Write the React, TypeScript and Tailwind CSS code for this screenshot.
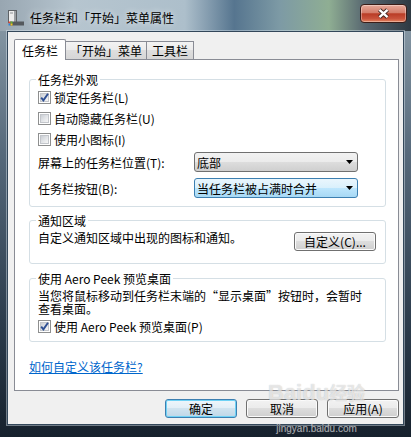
import React from "react";

const font = "font-['Noto_Sans_CJK_SC','Noto_Sans',sans-serif]";

const grayBtn =
  "flex h-[19px] items-center justify-center rounded-[3px] border border-[#707070] bg-[linear-gradient(180deg,#f2f2f2_0%,#ebebeb_50%,#dddddd_50%,#cfcfcf_100%)] shadow-[inset_0_0_0_1px_#fbfbfb]";

function TaskbarIcon() {
  return (
    <svg className="ml-[8px] mt-[10px] shrink-0" width="16" height="16" viewBox="0 0 16 16">
      <rect x="0.5" y="0.5" width="8" height="12" fill="#ececec" stroke="#5e6266" />
      <rect x="6" y="1" width="2" height="11" fill="#9a9ea2" />
      <rect x="2" y="2.5" width="3" height="1" fill="#8b8f93" />
      <rect x="2" y="11.5" width="14" height="4" fill="#55595d" />
      <rect x="0.5" y="11.5" width="2" height="2" fill="#e8412c" />
      <rect x="2.5" y="11.5" width="2" height="2" fill="#5fb336" />
      <rect x="0.5" y="13.5" width="2" height="2" fill="#2a86d8" />
      <rect x="2.5" y="13.5" width="2" height="2" fill="#f7c21b" />
    </svg>
  );
}

function CheckBox({ checked }: { checked?: boolean }) {
  return (
    <span className="relative flex h-[13px] w-[13px] shrink-0 items-center justify-center border border-[#8e8f8f] bg-white">
      <span className="h-[9px] w-[9px] border border-[#c3c6cb] bg-[linear-gradient(135deg,#cbcfd5_0%,#e4e6e9_55%,#f6f6f6_100%)]" />
      {checked && (
        <svg className="absolute left-[0px] top-[0px]" width="11" height="11" viewBox="0 0 11 11">
          <path d="M2.2 5.6 L4.4 8.4 L9 1.8" fill="none" stroke="#2e4f93" strokeWidth="1.9" />
        </svg>
      )}
    </span>
  );
}

function CheckRow({ checked, label, className = "" }: { checked?: boolean; label: string; className?: string }) {
  return (
    <div className={`flex h-[13px] items-center gap-[3px] ${className}`}>
      <CheckBox checked={checked} />
      <span className="whitespace-nowrap">{label}</span>
    </div>
  );
}

function Combo({ text, hot }: { text: string; hot?: boolean }) {
  return (
    <div
      className={
        hot
          ? "flex h-[20px] w-[164px] items-center justify-between rounded-[3px] border border-[#3c7fb1] bg-[linear-gradient(180deg,#eaf6fd_0%,#d9f0fc_50%,#bee6fd_50%,#a7d9f5_100%)] pl-[2px] pr-[4px]"
          : "flex h-[20px] w-[164px] items-center justify-between rounded-[3px] border border-[#707070] bg-[linear-gradient(180deg,#f2f2f2_0%,#ebebeb_50%,#dddddd_50%,#cfcfcf_100%)] pl-[2px] pr-[4px]"
      }
    >
      <span className="whitespace-nowrap">{text}</span>
      <svg width="7" height="4" viewBox="0 0 7 4">
        <path d="M0 0H7L3.5 4Z" fill="#000" />
      </svg>
    </div>
  );
}

export default function App() {
  return (
    <div
      className={`relative flex h-[437px] w-[411px] flex-col overflow-hidden bg-[linear-gradient(180deg,#8e9fab_0%,#56697b_35%,#2b3b4b_75%,#16212d_100%)] text-[12px] leading-[13px] text-black ${font}`}
    >
      {/* title bar */}
      <div className="flex h-[31px] shrink-0 items-start bg-[linear-gradient(90deg,#98a6b1_0%,#b6c5cf_18%,#adbfcb_45%,#56758f_57%,#7d9aa5_68%,#8fae93_80%,#56656f_89%,#2e3942_100%)]">
        <TaskbarIcon />
        <span className="ml-[6px] mt-[11px] whitespace-nowrap [text-shadow:0_0_6px_rgba(255,255,255,0.8)]">
          任务栏和「开始」菜单属性
        </span>
        <div className="ml-auto mr-[4px] mt-[4px] flex h-[19px] w-[47px] items-center justify-center rounded-[4px] border border-[#3b1d18] bg-[linear-gradient(180deg,#e6a899_0%,#d47e6b_45%,#b93c26_52%,#c9533c_80%,#e3845f_100%)] shadow-[inset_0_0_0_1px_rgba(255,255,255,0.35)]">
          <svg width="13" height="11" viewBox="0 0 13 11">
            <path d="M2.5 1.8 L10.5 9.2 M10.5 1.8 L2.5 9.2" stroke="#3a2420" strokeWidth="4.2" />
            <path d="M2.5 1.8 L10.5 9.2 M10.5 1.8 L2.5 9.2" stroke="#fff" strokeWidth="2.4" />
          </svg>
        </div>
      </div>

      {/* client area */}
      <div className="mx-[7px] flex h-[394px] shrink-0 flex-col border border-[#33475a] bg-[#f0f0f0] shadow-[0_0_0_1px_rgba(220,230,240,0.45)]">
        {/* tabs */}
        <div className="ml-[6px] mt-[7px] flex h-[20px] items-end">
          <div className="relative z-10 -mb-[1px] flex h-[21px] w-[52px] items-center justify-center rounded-t-[2px] border border-b-0 border-[#898c95] bg-white">
            任务栏
          </div>
          <div className="flex h-[18px] w-[81px] items-center justify-center border-r border-t border-[#898c95] bg-[linear-gradient(180deg,#f3f3f3_0%,#ebebeb_50%,#dedede_50%,#d6d6d6_100%)]">
            「开始」菜单
          </div>
          <div className="flex h-[18px] w-[47px] items-center justify-center border-r border-t border-[#898c95] bg-[linear-gradient(180deg,#f3f3f3_0%,#ebebeb_50%,#dedede_50%,#d6d6d6_100%)]">
            工具栏
          </div>
        </div>

        {/* tab page */}
        <div className="ml-[6px] h-[332px] w-[385px] border border-[#898c95] bg-white pl-[14px] pr-[12px] pt-[13px]">
          <fieldset className="rounded-[3px] border border-[#d5dfe5] pb-[8px] pl-[6px] pr-[9px] pt-[5px]">
            <legend className="px-[2px] leading-[13px]">任务栏外观</legend>
            <div className="flex flex-col pl-[2px]">
              <CheckRow checked label="锁定任务栏(L)" />
              <CheckRow className="mt-[8px]" label="自动隐藏任务栏(U)" />
              <CheckRow className="mt-[8px]" label="使用小图标(I)" />
              <div className="mt-[6px] flex h-[20px] items-center">
                <span className="w-[156px] whitespace-nowrap">屏幕上的任务栏位置(T):</span>
                <Combo text="底部" />
              </div>
              <div className="mt-[6px] flex h-[20px] items-center">
                <span className="w-[156px] whitespace-nowrap">任务栏按钮(B):</span>
                <Combo hot text="当任务栏被占满时合并" />
              </div>
            </div>
          </fieldset>

          <fieldset className="mt-[7px] rounded-[3px] border border-[#d5dfe5] pb-[12px] pl-[6px] pr-[9px] pt-[4px]">
            <legend className="px-[2px] leading-[13px]">通知区域</legend>
            <div className="flex items-start justify-between pl-[2px]">
              <span className="whitespace-nowrap">自定义通知区域中出现的图标和通知。</span>
              <div className={`${grayBtn} mt-[1px] w-[82px]`}>自定义(C)...</div>
            </div>
          </fieldset>

          <fieldset className="mt-[8px] rounded-[3px] border border-[#d5dfe5] pb-[8px] pl-[6px] pr-[9px] pt-[4px]">
            <legend className="px-[2px] leading-[13px]">使用 Aero Peek 预览桌面</legend>
            <div className="flex flex-col pl-[2px]">
              <p className="whitespace-nowrap leading-[13px]">
                当您将鼠标移动到任务栏末端的“显示桌面”按钮时，会暂时
                <br />
                查看桌面。
              </p>
              <CheckRow checked className="mt-[5px]" label="使用 Aero Peek 预览桌面(P)" />
            </div>
          </fieldset>

          <div className="mt-[18px]">
            <span className="text-[#0066cc] underline">如何自定义该任务栏?</span>
          </div>
        </div>

        {/* buttons */}
        <div className="mt-[8px] flex justify-end gap-[9px] pr-[4px]">
          <div className="flex h-[19px] w-[72px] items-center justify-center rounded-[3px] border border-[#3c7fb1] bg-[linear-gradient(180deg,#eef6fb_0%,#e2eef6_50%,#d0e3ef_50%,#bfd7e7_100%)] shadow-[inset_0_0_0_1px_#6fd2f5]">
            确定
          </div>
          <div className={`${grayBtn} w-[72px]`}>取消</div>
          <div className={`${grayBtn} w-[72px]`}>应用(A)</div>
        </div>
      </div>

      {/* watermark */}
      <div className="pointer-events-none absolute left-[268px] top-[380px] flex flex-col items-center text-[rgba(255,255,255,0.6)] [text-shadow:0_0_1px_rgba(110,110,110,0.45)]">
        <span className="font-['Liberation_Sans',sans-serif] text-[22px] font-bold leading-[24px]">
          Baidu<span className={`${font} text-[18px]`}>经验</span>
        </span>
        <span className="mt-[18px] font-['Liberation_Sans',sans-serif] text-[10px] leading-[11px]">jingyan.baidu.com</span>
      </div>
    </div>
  );
}
